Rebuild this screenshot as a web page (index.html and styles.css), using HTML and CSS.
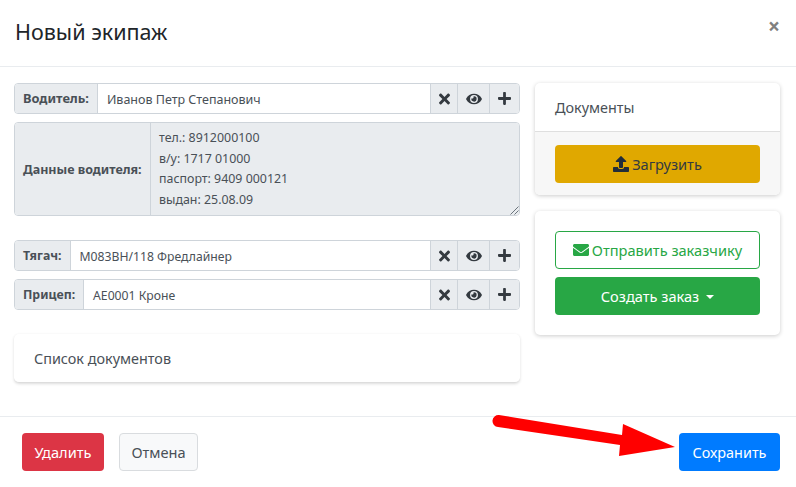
FILE: index.html
```html
<!DOCTYPE html>
<html lang="ru">
<head>
<meta charset="utf-8">
<title>Новый экипаж</title>
<link rel="stylesheet" href="styles.css">
</head>
<body>
<div class="modal">
  <header class="modal-header">
    <h5 class="modal-title">Новый экипаж</h5>
    <span class="close">×</span>
  </header>
  <main class="modal-body">
    <div class="col-left">
      <div class="input-group">
        <div class="label wide">Водитель:</div>
        <div class="control">Иванов Петр Степанович</div>
        <div class="addon"><svg class="i-x" viewBox="0 0 352 512"><path d="M242.700 256l100-100c12.300-12.300 12.300-32.200 0-44.500l-22.200-22.200c-12.300-12.300-32.200-12.300-44.500 0L176 189.300 76 89.300c-12.300-12.300-32.200-12.300-44.500 0L9.300 111.500c-12.300 12.300-12.300 32.200 0 44.500l100 100-100 100c-12.300 12.300-12.300 32.200 0 44.500l22.200 22.200c12.300 12.300 32.200 12.300 44.500 0l100-100 100 100c12.300 12.300 32.200 12.300 44.500 0l22.200-22.200c12.300-12.300 12.300-32.200 0-44.500L242.700 256z"/></svg></div>
        <div class="addon eye"><svg class="i-eye" viewBox="0 0 576 512"><path d="M572.500 241.400C518.300 135.600 410.900 64 288 64S57.700 135.600 3.500 241.400a32.400 32.400 0 0 0 0 29.200C57.700 376.400 165.100 448 288 448s230.300-71.600 284.500-177.400a32.400 32.400 0 0 0 0-29.200zM288 400a144 144 0 1 1 144-144 143.900 143.900 0 0 1-144 144zm0-240a95.300 95.300 0 0 0-25.300 3.800 47.900 47.900 0 0 1-66.900 66.900A95.800 95.800 0 1 0 288 160z"/></svg></div>
        <div class="addon plus"><svg class="i-plus" viewBox="0 0 448 512"><path d="M416 208H272V64c0-17.700-14.300-32-32-32h-32c-17.700 0-32 14.300-32 32v144H32c-17.700 0-32 14.300-32 32v32c0 17.700 14.300 32 32 32h144v144c0 17.700 14.300 32 32 32h32c17.700 0 32-14.300 32-32V304h144c17.700 0 32-14.300 32-32v-32c0-17.700-14.300-32-32-32z"/></svg></div>
      </div>
      <div class="input-group details">
        <div class="label">Данные водителя:</div>
        <div class="control readonly">
          <div>тел.: 8912000100</div>
          <div>в/у: 1717 01000</div>
          <div>паспорт: 9409 000121</div>
          <div>выдан: 25.08.09</div>
          <svg class="grip" viewBox="0 0 10 10"><path d="M9.500 1.500 1.500 9.500M9.500 5.500 5.500 9.500" /></svg>
        </div>
      </div>
      <div class="input-group">
        <div class="label">Тягач:</div>
        <div class="control compact">М083ВН/118 Фредлайнер</div>
        <div class="addon"><svg class="i-x" viewBox="0 0 352 512"><path d="M242.700 256l100-100c12.300-12.300 12.300-32.200 0-44.500l-22.200-22.200c-12.300-12.300-32.200-12.300-44.500 0L176 189.300 76 89.300c-12.300-12.300-32.200-12.300-44.500 0L9.300 111.500c-12.300 12.300-12.300 32.200 0 44.500l100 100-100 100c-12.300 12.300-12.300 32.200 0 44.500l22.200 22.200c12.300 12.300 32.200 12.300 44.500 0l100-100 100 100c12.300 12.300 32.200 12.300 44.500 0l22.200-22.200c12.300-12.300 12.300-32.200 0-44.500L242.700 256z"/></svg></div>
        <div class="addon eye"><svg class="i-eye" viewBox="0 0 576 512"><path d="M572.500 241.400C518.300 135.600 410.900 64 288 64S57.700 135.600 3.500 241.400a32.400 32.400 0 0 0 0 29.200C57.700 376.400 165.100 448 288 448s230.300-71.600 284.500-177.400a32.400 32.400 0 0 0 0-29.200zM288 400a144 144 0 1 1 144-144 143.900 143.900 0 0 1-144 144zm0-240a95.300 95.300 0 0 0-25.300 3.800 47.900 47.900 0 0 1-66.900 66.900A95.800 95.800 0 1 0 288 160z"/></svg></div>
        <div class="addon plus"><svg class="i-plus" viewBox="0 0 448 512"><path d="M416 208H272V64c0-17.700-14.300-32-32-32h-32c-17.700 0-32 14.300-32 32v144H32c-17.700 0-32 14.300-32 32v32c0 17.700 14.300 32 32 32h144v144c0 17.700 14.300 32 32 32h32c17.700 0 32-14.300 32-32V304h144c17.700 0 32-14.300 32-32v-32c0-17.700-14.300-32-32-32z"/></svg></div>
      </div>
      <div class="input-group">
        <div class="label">Прицеп:</div>
        <div class="control compact">АЕ0001 Кроне</div>
        <div class="addon"><svg class="i-x" viewBox="0 0 352 512"><path d="M242.700 256l100-100c12.300-12.300 12.300-32.200 0-44.500l-22.200-22.200c-12.300-12.300-32.200-12.300-44.500 0L176 189.300 76 89.300c-12.300-12.300-32.200-12.300-44.500 0L9.300 111.500c-12.300 12.300-12.300 32.200 0 44.500l100 100-100 100c-12.300 12.300-12.300 32.200 0 44.500l22.200 22.200c12.300 12.300 32.200 12.300 44.500 0l100-100 100 100c12.300 12.300 32.200 12.300 44.500 0l22.200-22.200c12.300-12.300 12.300-32.200 0-44.500L242.700 256z"/></svg></div>
        <div class="addon eye"><svg class="i-eye" viewBox="0 0 576 512"><path d="M572.500 241.400C518.300 135.600 410.900 64 288 64S57.700 135.600 3.500 241.400a32.400 32.400 0 0 0 0 29.200C57.700 376.400 165.100 448 288 448s230.300-71.600 284.500-177.400a32.400 32.400 0 0 0 0-29.200zM288 400a144 144 0 1 1 144-144 143.900 143.900 0 0 1-144 144zm0-240a95.300 95.300 0 0 0-25.300 3.800 47.900 47.900 0 0 1-66.900 66.900A95.800 95.800 0 1 0 288 160z"/></svg></div>
        <div class="addon plus"><svg class="i-plus" viewBox="0 0 448 512"><path d="M416 208H272V64c0-17.700-14.300-32-32-32h-32c-17.700 0-32 14.300-32 32v144H32c-17.700 0-32 14.300-32 32v32c0 17.700 14.300 32 32 32h144v144c0 17.700 14.300 32 32 32h32c17.700 0 32-14.300 32-32V304h144c17.700 0 32-14.300 32-32v-32c0-17.700-14.300-32-32-32z"/></svg></div>
      </div>
      <section class="card doc-list">
        <div class="card-head">Список документов</div>
      </section>
    </div>
    <aside class="col-right">
      <section class="card">
        <div class="card-title">Документы</div>
        <div class="card-foot">
          <button class="btn btn-warning"><svg class="i-upload" viewBox="0 0 512 512"><path d="M296 384h-80c-13.300 0-24-10.700-24-24V192h-87.700c-17.800 0-26.700-21.500-14.100-34.100L242.300 5.700c7.500-7.500 19.800-7.500 27.300 0l152.200 152.200c12.600 12.600 3.700 34.100-14.100 34.100H320v168c0 13.300-10.700 24-24 24zm216-8v112c0 13.300-10.700 24-24 24H24c-13.300 0-24-10.700-24-24V376c0-13.300 10.700-24 24-24h136v8c0 30.900 25.100 56 56 56h80c30.900 0 56-25.100 56-56v-8h136c13.300 0 24 10.700 24 24z"/></svg>Загрузить</button>
        </div>
      </section>
      <section class="card actions">
        <button class="btn btn-outline"><svg class="i-mail" viewBox="0 0 512 512"><path d="M502.300 190.800c3.900-3.100 9.700-.2 9.700 4.700V400c0 26.500-21.500 48-48 48H48c-26.500 0-48-21.500-48-48V195.600c0-5 5.700-7.800 9.700-4.700 22.400 17.400 52.100 39.500 154.100 113.600 21.100 15.400 56.700 47.800 92.200 47.600 35.700.3 72-32.800 92.300-47.600 102-74.100 131.600-96.300 154-113.700zM256 320c23.200.4 56.600-29.200 73.400-41.400 132.700-96.300 142.800-104.700 173.400-128.700 5.800-4.500 9.200-11.500 9.200-18.900v-19c0-26.500-21.500-48-48-48H48C21.500 64 0 85.500 0 112v19c0 7.400 3.400 14.300 9.200 18.900 30.600 23.900 40.700 32.400 173.400 128.700 16.800 12.200 50.200 41.800 73.400 41.400z"/></svg>Отправить заказчику</button>
        <button class="btn btn-success">Создать заказ<span class="caret"></span></button>
      </section>
    </aside>
  </main>
  <footer class="modal-footer">
    <button class="btn btn-danger">Удалить</button>
    <button class="btn btn-light">Отмена</button>
    <button class="btn btn-primary">Сохранить</button>
  </footer>
</div>
<svg class="arrow" viewBox="0 0 796 487"><path d="M499 415 622 435 623 424 675 447 619 456 620 445 498 427A6 6 0 0 1 499 415Z"/></svg>
</body>
</html>
```
FILE: styles.css
```css
* { box-sizing: border-box; }
html, body { margin: 0; padding: 0; }
body {
  width: 796px;
  height: 487px;
  overflow: hidden;
  background: #fff;
  color: #495057;
  font-family: "Noto Sans", "Open Sans", sans-serif;
  font-size: 13px;
  position: relative;
}
.modal { display: flex; flex-direction: column; height: 487px; }
.modal-header {
  height: 67px;
  padding: 15px 16px 0 15px;
  border-bottom: 1px solid #e9ecef;
  display: flex;
  justify-content: space-between;
  align-items: flex-start;
}
.modal-title { margin: 0; font-size: 21.500px; font-weight: 400; line-height: 33px; color: #212529; }
.close { font-size: 21px; font-weight: 700; color: #808080; line-height: 22px; }
.modal-body {
  height: 349px;
  padding: 16px 16px 0 14px;
  display: flex;
  justify-content: space-between;
}
.col-left { width: 506px; display: flex; flex-direction: column; }
.col-right { width: 245px; display: flex; flex-direction: column; gap: 16px; }
.input-group {
  display: flex;
  height: 31px;
  margin-bottom: 8px;
  border: 1px solid #ced4da;
  border-radius: 4px;
  overflow: hidden;
  background: #fff;
}
.label {
  display: flex;
  align-items: center;
  padding: 0 8px 1px;
  background: #e9ecef;
  font-weight: 700;
  font-size: 12.300px;
  color: #495057;
  border-right: 1px solid #ced4da;
  white-space: nowrap;
}
.label.wide { font-size: 12.800px; }
.control {
  flex: 1;
  display: flex;
  align-items: center;
  padding: 1px 9px 0;
  font-size: 12.500px;
  color: #495057;
}
.control.compact { font-size: 12.200px; }
.addon {
  width: 27px;
  display: flex;
  align-items: center;
  justify-content: center;
  background: #e9ecef;
  border-left: 1px solid #ced4da;
  flex: none;
}
.addon.eye { width: 32px; }
.addon.plus { width: 30px; }
.addon svg { fill: #343a40; display: block; }
.i-x { width: 11px; height: 16px; }
.i-eye { width: 16px; height: 14px; }
.i-plus { width: 13px; height: 15px; }
.details { height: 94px; margin-bottom: 24px; }
.details .label { width: 136px; flex: none; font-size: 12.500px; padding-bottom: 0; }
.control.readonly {
  display: block;
  background: #e9ecef;
  padding: 5px 8px;
  line-height: 20.500px;
  font-size: 12.400px;
  position: relative;
}
.grip { position: absolute; right: 0; bottom: 0; width: 10px; height: 10px; fill: none; stroke: #6c757d; stroke-width: 1; }
.card {
  background: #fff;
  border-radius: 5px;
  box-shadow: 0 1px 4px rgba(0, 0, 0, .2);
}
.doc-list {
  margin-top: 16px;
  height: 49px;
  border-bottom: 1px solid #ddd;
  box-shadow: 0 1px 3px rgba(0, 0, 0, .14);
}
.card-head { padding: 14px 20px; font-size: 14.400px; line-height: 22px; color: #495057; }
.card-title {
  height: 49px;
  padding: 0 20px;
  font-size: 14.400px;
  line-height: 50px;
  color: #495057;
  border-bottom: 1px solid #dfdfdf;
}
.card-foot {
  padding: 13px 20px 12px;
  background: #f7f7f7;
  border-radius: 0 0 5px 5px;
  display: flex;
}
.actions { padding: 20px; display: flex; flex-direction: column; gap: 8px; height: 124px; }
.btn {
  height: 38px;
  padding: 0 12px;
  border: 1px solid transparent;
  border-radius: 4px;
  font-family: inherit;
  font-size: 14.600px;
  display: inline-flex;
  align-items: center;
  justify-content: center;
  white-space: nowrap;
}
.card .btn { width: 205px; flex: none; }
.btn-warning { background: #e0a800; color: #343a40; }
.btn-outline { background: #fff; color: #28a745; border-color: #28a745; }
.btn-success { background: #28a745; color: #fff; }
.btn-danger { background: #dc3545; color: #fff; width: 82px; }
.btn-light { background: #f8f9fa; color: #495057; border-color: #d9dcdf; width: 79px; margin-left: 15px; }
.btn-primary { background: #007bff; color: #fff; width: 101px; margin-left: auto; font-size: 14.400px; }
.i-upload { width: 16px; height: 16px; fill: #212d3a; margin-right: 3px; }
.i-mail { width: 16px; height: 16px; fill: #28a745; margin-right: 3px; }
.caret {
  margin-left: 7px;
  margin-top: 1px;
  border-top: 4px solid #fff;
  border-left: 4px solid transparent;
  border-right: 4px solid transparent;
}
.modal-footer {
  height: 71px;
  padding: 16px 16px 0 22px;
  border-top: 1px solid #e9ecef;
  display: flex;
  align-items: flex-start;
}
.arrow { position: absolute; left: 0; top: 0; width: 796px; height: 487px; fill: #f00; pointer-events: none; }
```
